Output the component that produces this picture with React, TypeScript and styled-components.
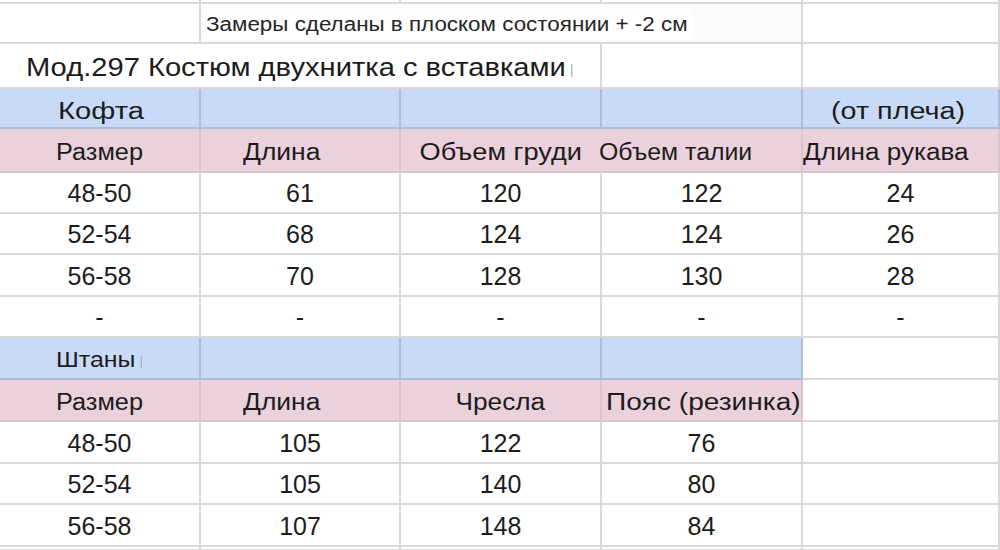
import React from 'react';
import styled, { createGlobalStyle } from 'styled-components';

const GlobalStyle = createGlobalStyle`
  html, body {
    margin: 0;
    padding: 0;
    background: #ffffff;
  }
`;

const BLUE = '#c9daf8';
const PINK = '#ead1dc';

const lineFor = (bg?: string) =>
  bg === BLUE ? '#aebcd6' : bg === PINK ? '#dcc4cf' : '#d9d9d9';

const Sheet = styled.div`
  width: 1000px;
  height: 550px;
  overflow: hidden;
  background: #ffffff;
  font-family: 'Liberation Sans', Arial, sans-serif;
  color: #1c1c1c;
`;

const Row = styled.div<{ $h: number }>`
  display: grid;
  grid-template-columns: 201px 200px 201px 201px 197px;
  height: ${(p) => p.$h}px;
`;

const Cell = styled.div<{
  $bg?: string;
  $span?: number;
  $align?: 'center' | 'start';
  $size?: number;
  $noRight?: boolean;
  $dy?: number;
}>`
  box-sizing: border-box;
  min-width: 0;
  display: flex;
  align-items: center;
  justify-content: ${(p) => (p.$align === 'start' ? 'flex-start' : 'center')};
  grid-column: span ${(p) => p.$span ?? 1};
  background: ${(p) => p.$bg ?? '#ffffff'};
  border-right: 2px solid ${(p) => (p.$noRight ? 'transparent' : lineFor(p.$bg))};
  border-bottom: 2px solid ${(p) => lineFor(p.$bg)};
  font-size: ${(p) => p.$size ?? 25}px;
  padding-top: ${(p) => p.$dy ?? 2}px;
  white-space: nowrap;
`;

// the sheet in the picture is drawn a little wider than the font, so labels stretch
const Label = styled.span<{ $indent?: number; $sx?: number; $mid?: boolean }>`
  display: inline-block;
  margin-left: ${(p) => p.$indent ?? 0}px;
  white-space: nowrap;
  transform: scaleX(${(p) => p.$sx ?? 1});
  transform-origin: ${(p) => (p.$mid ? 'center' : 'left')} center;
`;

const Note = styled.span`
  display: inline-block;
  margin-left: 5px;
  padding: 4px 4px 4px 0;
  background: #ffffff;
  font-size: 20px;
  color: #262626;
  transform: scaleX(1.12);
  transform-origin: left center;
`;

const Caret = styled.span<{ $tall: number }>`
  display: inline-block;
  width: 1px;
  height: ${(p) => p.$tall}px;
  margin-left: 5px;
  vertical-align: -1px;
  background: #ababab;
`;

const jacketRows = [
  ['48-50', '61', '120', '122', '24'],
  ['52-54', '68', '124', '124', '26'],
  ['56-58', '70', '128', '130', '28'],
  ['-', '-', '-', '-', '-'],
];
const jacketHeights = [41, 41, 42, 41];

const pantsRows = [
  ['48-50', '105', '122', '76'],
  ['52-54', '105', '140', '80'],
  ['56-58', '107', '148', '84'],
];
const pantsHeights = [42, 41, 42];

const App: React.FC = () => {
  return (
    <Sheet>
      <GlobalStyle />
      <Row $h={4}>
        <Cell />
        <Cell />
        <Cell />
        <Cell />
        <Cell />
      </Row>

      <Row $h={40}>
        <Cell />
        <Cell $span={3} $align="start" $bg="#fbfbfb">
          <Note>Замеры сделаны в плоском состоянии + -2 см</Note>
        </Cell>
        <Cell />
      </Row>

      <Row $h={45}>
        <Cell $span={3} $align="start" $size={25} $dy={4}>
          <Label $indent={26} $sx={1.165}>
            Мод.297 Костюм двухнитка с вставками
            <Caret $tall={13} />
          </Label>
        </Cell>
        <Cell />
        <Cell />
      </Row>

      <Row $h={40}>
        <Cell $bg={BLUE} $align="start" $size={23} $dy={6}>
          <Label $indent={58} $sx={1.27}>Кофта</Label>
        </Cell>
        <Cell $bg={BLUE} />
        <Cell $bg={BLUE} />
        <Cell $bg={BLUE} />
        <Cell $bg={BLUE} $align="start" $size={23} $dy={6}>
          <Label $indent={28} $sx={1.25}>(от плеча)</Label>
        </Cell>
      </Row>

      <Row $h={44}>
        <Cell $bg={PINK} $size={23} $dy={4}>
          <Label $mid $sx={1.1}>Размер</Label>
        </Cell>
        <Cell $bg={PINK} $align="start" $size={23} $dy={4}>
          <Label $indent={42} $sx={1.15}>Длина</Label>
        </Cell>
        <Cell $bg={PINK} $size={23} $dy={4} $noRight>
          <Label $mid $sx={1.18}>Объем груди</Label>
        </Cell>
        <Cell $bg={PINK} $align="start" $size={23} $dy={4}>
          <Label $indent={-3} $sx={1.08}>Объем талии</Label>
        </Cell>
        <Cell $bg={PINK} $align="start" $size={23} $dy={4}>
          <Label $indent={0} $sx={1.135}>Длина рукава</Label>
        </Cell>
      </Row>

      {jacketRows.map((r, i) => (
        <Row $h={jacketHeights[i]} key={'j' + i}>
          {r.map((v, j) => (
            <Cell key={j}>{v}</Cell>
          ))}
        </Row>
      ))}

      <Row $h={42}>
        <Cell $bg={BLUE} $align="start" $size={22} $dy={4}>
          <Label $indent={56} $sx={1.13}>
            Штаны
            <Caret $tall={12} />
          </Label>
        </Cell>
        <Cell $bg={BLUE} />
        <Cell $bg={BLUE} />
        <Cell $bg={BLUE} />
        <Cell />
      </Row>

      <Row $h={42}>
        <Cell $bg={PINK} $size={23} $dy={4}>
          <Label $mid $sx={1.1}>Размер</Label>
        </Cell>
        <Cell $bg={PINK} $align="start" $size={23} $dy={4}>
          <Label $indent={42} $sx={1.15}>Длина</Label>
        </Cell>
        <Cell $bg={PINK} $size={23} $dy={4}>
          <Label $mid $sx={1.14}>Чресла</Label>
        </Cell>
        <Cell $bg={PINK} $align="start" $size={23} $dy={4}>
          <Label $indent={4} $sx={1.22}>Пояс (резинка)</Label>
        </Cell>
        <Cell />
      </Row>

      {pantsRows.map((r, i) => (
        <Row $h={pantsHeights[i]} key={'p' + i}>
          {r.map((v, j) => (
            <Cell key={j}>{v}</Cell>
          ))}
          <Cell />
        </Row>
      ))}

      <Row $h={4}>
        <Cell />
        <Cell />
        <Cell />
        <Cell />
        <Cell />
      </Row>
    </Sheet>
  );
};

export default App;
